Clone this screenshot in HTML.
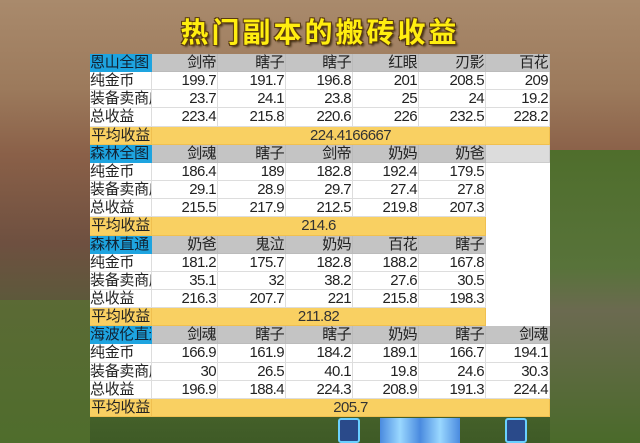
<!DOCTYPE html>
<html><head><meta charset="utf-8"><style>
body{margin:0;width:640px;height:443px;overflow:hidden;position:relative;font-family:"Liberation Sans","Noto Sans CJK SC",sans-serif;
background:linear-gradient(180deg,#a98a6c 0%,#9c7a5c 20%,#8a6048 35%,#6e5040 55%,#5a5a3a 70%,#4e6a2e 85%,#3e5a26 100%);}
.bgr{position:absolute;right:0;top:150px;width:90px;height:293px;background:linear-gradient(180deg,#4f6e2c,#58733a 40%,#6b6a50 55%,#4a6a2a);}
.bgl{position:absolute;left:0;top:300px;width:90px;height:143px;background:linear-gradient(180deg,#5b6a35,#4f6d2c);}
.title{position:absolute;left:0;width:640px;top:11px;text-align:center;font-size:28px;font-weight:bold;color:#ffee10;letter-spacing:3px;
text-shadow:-1px -1px 0 #5a3a10,1px -1px 0 #5a3a10,-1px 1px 0 #5a3a10,1px 1px 0 #5a3a10,2px 2px 2px #3a2a10;font-family:"WenQuanYi Zen Hei","Noto Sans CJK SC",sans-serif;}
.panel{position:absolute;left:90px;top:54px;width:460px;height:363px;background:#fff;}
.c{position:absolute;height:18px;line-height:18px;font-size:15px;letter-spacing:-0.6px;color:#222;box-sizing:border-box;border-right:1px solid #ddd;border-bottom:1px solid #ddd;white-space:nowrap;overflow:hidden}
.n{text-align:right;padding-right:1px}
.l{text-align:left;padding-left:0;letter-spacing:-0.3px}
.h{background:#c4c4c4;border-color:#bbb}
.e{background:#dcdcdc;border-color:#ccc}
.b{background:#1ea4e0;color:#123;border-color:#1ea4e0}
.y{background:#f9d062;border-color:#f0c050;text-align:center;color:#333}
.gate{position:absolute;top:418px;width:22px;height:25px;background:#2a4a8a;border:2px solid #6ad0ff;box-sizing:border-box;border-radius:3px}
</style></head><body>
<div class="bgr"></div><div class="bgl"></div>
<div class="title">热门副本的搬砖收益</div>
<div class="panel"></div>
<div class="gate" style="left:338px"></div>
<div class="gate" style="left:505px"></div>
<div style="position:absolute;left:380px;top:418px;width:80px;height:25px;background:linear-gradient(90deg,#4a8adf,#9ad8ff,#4a8adf,#9ad8ff,#4a8adf)"></div>
<div id="t"></div>
<script>
var X=[90,152,218,286,353,419,486,550];
var blocks=[
["恩山全图",["剑帝","瞎子","瞎子","红眼","刃影","百花"],[[199.7,191.7,196.8,201,208.5,209],[23.7,24.1,23.8,25,24,19.2],[223.4,215.8,220.6,226,232.5,228.2]],"224.4166667",1],
["森林全图",["剑魂","瞎子","剑帝","奶妈","奶爸",""],[[186.4,189,182.8,192.4,179.5],[29.1,28.9,29.7,27.4,27.8],[215.5,217.9,212.5,219.8,207.3]],"214.6",0],
["森林直通",["奶爸","鬼泣","奶妈","百花","瞎子"],[[181.2,175.7,182.8,188.2,167.8],[35.1,32,38.2,27.6,30.5],[216.3,207.7,221,215.8,198.3]],"211.82",0],
["海波伦直通",["剑魂","瞎子","瞎子","奶妈","瞎子","剑魂"],[[166.9,161.9,184.2,189.1,166.7,194.1],[30,26.5,40.1,19.8,24.6,30.3],[196.9,188.4,224.3,208.9,191.3,224.4]],"205.7",1]];
var labels=["纯金币","装备卖商店","总收益"];
var H="",R=0,T0=54,RH=18.15;
function cell(x1,x2,row,cls,txt){var y=Math.round(T0+row*RH);var y2=Math.round(T0+(row+1)*RH);H+='<div class="c '+cls+'" style="left:'+x1+'px;top:'+y+'px;width:'+(x2-x1)+'px;height:'+(y2-y)+'px">'+txt+'</div>';}
blocks.forEach(function(b){
 cell(X[0],X[1],R,"b l",b[0]);
 b[1].forEach(function(t,i){cell(X[i+1],X[i+2],R,t?"h n":"e n",t);});
 R++;
 b[2].forEach(function(row,j){cell(X[0],X[1],R,"l",labels[j]);row.forEach(function(v,i){cell(X[i+1],X[i+2],R,"n",v);});R++;});
 cell(X[0],X[1],R,"y l",'<span style="color:#222">平均收益</span>');
 cell(X[1],b[4]?X[7]:X[6],R,"y",b[3]);
 R++;
});
document.getElementById("t").innerHTML=H;
</script>
</body></html>
